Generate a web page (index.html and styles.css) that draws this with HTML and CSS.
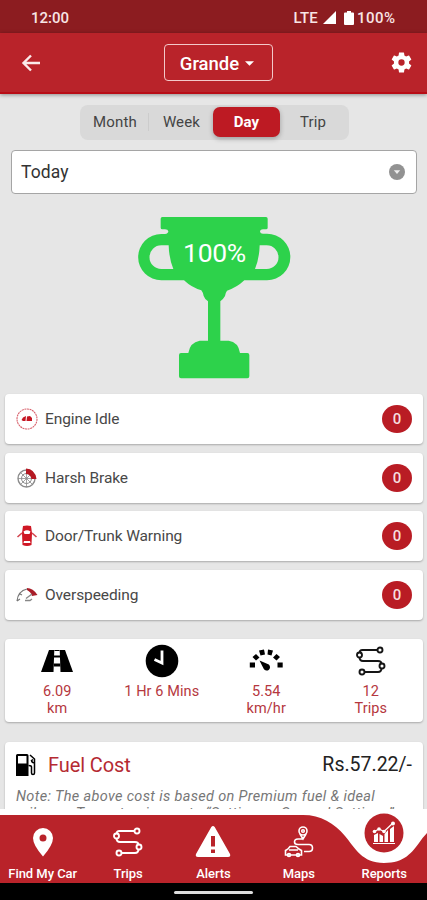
FILE: index.html
```html
<!DOCTYPE html>
<html lang="en">
<head>
<meta charset="utf-8">
<title>Reports</title>
<link rel="stylesheet" href="styles.css">
</head>
<body>
<svg class="defs" width="0" height="0">
  <symbol id="route" viewBox="0 0 30 30">
    <g fill="none" stroke="currentColor" stroke-width="1.9">
      <path d="M22 4H6.500Q3.500 4 3.500 7M3.500 11Q3.500 15 7 15H22Q25.500 15 25.500 18M25.500 22Q25.500 26 22 26H9"/>
      <circle cx="24" cy="4" r="2.500"/><circle cx="3.500" cy="9" r="2.500"/><circle cx="26" cy="20" r="2.500"/><circle cx="6" cy="26" r="2.500"/>
    </g>
  </symbol>
</svg>
<div class="status">
  <span class="time">12:00</span>
  <span class="lte">LTE</span>
  <svg class="signal" viewBox="0 0 13 13"><path d="M13 0V13H0Z"/></svg>
  <svg class="battery" viewBox="0 0 10 14"><path d="M3 0H7V1.500H9Q10 1.500 10 2.500V13Q10 14 9 14H1Q0 14 0 13V2.500Q0 1.500 1 1.500H3Z"/></svg>
  <span class="pct">100%</span>
</div>
<header class="appbar">
  <svg class="back" viewBox="0 0 20 18"><path d="M10 1.500L2.500 9L10 16.500M2.500 9H19"/></svg>
  <div class="picker"><span>Grande</span><svg viewBox="0 0 10 5"><path d="M0 0H10L5 5Z"/></svg></div>
  <svg class="gear" viewBox="2 2 20 20"><path d="M19.140 12.940c.04-.3.060-.61.060-.94 0-.32-.02-.64-.07-.94l2.030-1.580a.49.490 0 0 0 .12-.61l-1.920-3.320a.488.488 0 0 0-.59-.22l-2.390.96c-.5-.38-1.030-.7-1.620-.94l-.36-2.540a.484.484 0 0 0-.48-.41h-3.840c-.24 0-.43.170-.47.410l-.36 2.540c-.59.240-1.130.570-1.620.940l-2.390-.96c-.22-.08-.47 0-.59.220L2.740 8.870c-.12.210-.08.470.12.610l2.030 1.580c-.05.3-.09.630-.09.940s.02.640.070.940l-2.030 1.580a.49.490 0 0 0-.12.610l1.920 3.320c.12.220.37.290.59.220l2.390-.96c.5.380 1.030.7 1.620.940l.36 2.540c.05.240.24.410.48.410h3.840c.24 0 .44-.17.470-.41l.36-2.540c.59-.24 1.130-.56 1.620-.94l2.390.96c.22.080.47 0 .59-.22l1.920-3.320c.12-.22.070-.47-.12-.61zM12 15a3 3 0 1 1 0-6 3 3 0 0 1 0 6z"/></svg>
</header>
<main class="content">
  <nav class="tabs">
    <span class="tab">Month</span><span class="tab divided">Week</span><span class="tab active">Day</span><span class="tab">Trip</span>
  </nav>
  <div class="select"><span>Today</span><svg viewBox="0 0 16 16"><circle cx="8" cy="8" r="8" fill="#929292"/><path d="M4.800 6.300H11.200L8 10Z" fill="#eee"/></svg></div>
  <div class="score">
    <svg viewBox="0 0 540 555">
      <path fill="#2dd24b" fill-rule="evenodd" d="M112 36H423Q428 36 428 41V68Q428 73 423 73H414Q405 74 405 80Q406 86 414 86H426A69.500 69.500 0 0 1 426 226H358Q335 248 306 257Q301 264 300 273Q296 281 286 289V407H311Q340 411 345 444H367Q373 444 373 450V514Q373 520 367 520H168Q162 520 162 514V450Q162 444 168 444H190Q195 412 224 407H249V289Q239 282 236 273Q234 262 229 256Q200 248 177 226H109A69.500 69.500 0 0 1 109 87H120Q130 86 130 79Q129 73 120 73H112Q107 73 107 68V41Q107 36 112 36ZM131 121H109A35.500 35.500 0 0 0 109 192H145Q132 160 131 121ZM404 121Q403 160 390 192H425A35.500 35.500 0 0 0 425 121Z"/>
    </svg>
    <span>100%</span>
  </div>
  <ul class="events">
    <li>
      <svg viewBox="0 0 22 22"><circle cx="11" cy="11" r="10" fill="none" stroke="#d8606b" stroke-width="1.100" stroke-dasharray="2 .6"/><path d="M5.500 12L7 9.500L10 8L9.500 13H7ZM11 8.500L14 8L16 10V13H10.500Z" fill="#c51623"/></svg>
      <span>Engine Idle</span><b>0</b>
    </li>
    <li>
      <svg viewBox="0 0 22 22"><g fill="none" stroke="#8c8c8c"><circle cx="10.500" cy="11.500" r="8.500" stroke-width="1.400"/><circle cx="10.500" cy="11.500" r="5"/><path d="M2 11.500H19M10.500 3V20M4.500 5.500L16.500 17.500M16.500 5.500L4.500 17.500" stroke-width=".8"/></g><path d="M10 1.500Q19 2 20.500 12L15.500 12Q14.500 7 10 7Z" fill="#b51923"/></svg>
      <span>Harsh Brake</span><b>0</b>
    </li>
    <li>
      <svg viewBox="0 0 22 22"><path d="M7 1Q11 0 15 1L16 8L15.500 20Q11 22 6.500 20L6 8Z" fill="#cf1724"/><path d="M7.500 6.500Q11 4 14.500 6.500L13.500 9H8.500ZM8 16H14L14.500 18H7.500Z" fill="#fff"/><path d="M6 8L1.500 12M16 8L20.500 12" stroke="#d34650" stroke-width="1.600"/></svg>
      <span>Door/Trunk Warning</span><b>0</b>
    </li>
    <li>
      <svg viewBox="0 0 22 22"><path d="M1 17Q2 7 11 5M1 17L4 15M4 10L6 11" fill="none" stroke="#777" stroke-width="1.200"/><path d="M11 4Q17 4 21.500 11L16 12Q15 8 11 6Z" fill="#a91e29"/><path d="M16 10L10 14.500M9 16.500H14L16 15" fill="none" stroke="#888" stroke-width="1.300"/></svg>
      <span>Overspeeding</span><b>0</b>
    </li>
  </ul>
  <section class="stats">
    <div>
      <svg viewBox="0 0 34 34"><path d="M9 6H25L33 28H1Z"/><path d="M14.300 6H19.700L20.500 28H13.500Z" fill="#fff"/><path d="M14.500 6H19.500V7H14.500ZM14 11.500H20V13.500H14ZM13.800 19.500H20.300V22.500H13.800Z"/></svg>
      <p>6.09<br>km</p>
    </div>
    <div>
      <svg viewBox="0 0 34 34"><circle cx="17" cy="17" r="16.300"/><path d="M17 6.500V19L9.500 15.500" fill="none" stroke="#fff" stroke-width="2.800"/></svg>
      <p>1 Hr 6 Mins</p>
    </div>
    <div>
      <svg viewBox="0 0 34 34"><path d="M0.800 18.500H6V23.500H.8ZM28.500 18.500H33.700V23.500H28.500ZM3.500 13L7 10L10.500 13.500L7 16.500ZM24 13.500L27.500 10L31 13L27.500 16.500ZM10 6.500L15 5.500L16 10.500L11.500 11.500ZM19 5.500L24 6.500L22.500 11.500L18.500 10.500Z"/><path d="M10.500 16.500L19.800 20.500A3.400 3.400 0 1 1 14.800 25Z"/></svg>
      <p>5.54<br>km/hr</p>
    </div>
    <div>
      <svg class="route"><use href="#route"/></svg>
      <p>12<br>Trips</p>
    </div>
  </section>
  <section class="fuel">
    <div class="fuel-head">
      <svg viewBox="0 0 21 22"><path fill-rule="evenodd" d="M1.500 0H11Q12.500 0 12.500 1.500V22H0V1.500Q0 0 1.500 0ZM2 2V9.500H10.500V2Z"/><path d="M14 1L18.500 5V9Q16 9 15.500 6.500L17 5.500M18.500 8V19Q18.500 20.500 17 20.500Q15.500 20.500 15.500 19V13Q15.500 11.500 12.500 11.500" fill="none" stroke="#000" stroke-width="1.500"/></svg>
      <h2>Fuel Cost</h2><span>Rs.57.22/-</span>
    </div>
    <p>Note: The above cost is based on Premium fuel &amp; ideal<br>mileage. To customize go to “Settings &gt; General Settings”.</p>
  </section>
</main>
<footer class="bottom">
  <svg class="wave" viewBox="0 0 427 74" preserveAspectRatio="none"><path fill="#b9232a" d="M0 6H303C321 6 334 14 345 27C355 39 362 54 384 54C405 54 412 43 419 34Q423 28 427 24V74H0Z"/></svg>
  <nav class="menu">
    <a><svg viewBox="0 0 30 30"><path fill-rule="evenodd" d="M15 1A10 10 0 0 1 25 11Q25 18 15 29.500Q5 18 5 11A10 10 0 0 1 15 1ZM15 7.500A3.500 3.500 0 1 0 15 14.500A3.500 3.500 0 1 0 15 7.500Z"/></svg><span>Find My Car</span></a>
    <a><svg><use href="#route"/></svg><span>Trips</span></a>
    <a><svg class="alert" viewBox="0 0 36 32"><path fill-rule="evenodd" d="M16.300 1Q18 -1 19.700 1L35 28Q36 31 33 31H3Q0 31 1 28ZM16 10V20.500H20V10ZM16 23.500V27H20V23.500Z"/></svg><span>Alerts</span></a>
    <a><svg class="map" viewBox="0 0 30 32"><g fill="none" stroke="#fff" stroke-width="1.600"><circle cx="19" cy="5" r="4"/><circle cx="19" cy="5" r="1.300"/><path d="M16 8L19 13L22 8M19 13H14Q10.500 13 10.500 16Q10.500 18.500 14 18.500H25Q28.500 18.500 28.500 22Q28.500 25.500 25 25.500H20M1.500 29V24.500L4 23L6 20.500H12L15 23L17.500 24.500V29ZM5 24H14"/><circle cx="5" cy="29" r="1.500"/><circle cx="14" cy="29" r="1.500"/></g></svg><span>Maps</span></a>
    <a><svg class="report" viewBox="0 0 40 40"><circle cx="20" cy="20" r="19.500" fill="#b9232a"/><path d="M9 30H31V31H9ZM10 22L14 20V29H10ZM15.500 21L19 23V29H15.500ZM20.500 21L24 17V29H20.500ZM26 16L30 13V29H26Z"/><path d="M10.500 18.500L15 16L20 18.500L29 10" fill="none" stroke="#fff" stroke-width="1.300"/><circle cx="10.500" cy="18.500" r="1.800"/><circle cx="15" cy="16" r="1.800"/><circle cx="20" cy="18.500" r="1.800"/><circle cx="29" cy="10.500" r="2"/></svg><span>Reports</span></a>
  </nav>
</footer>
<div class="gesture"><i></i></div>
</body>
</html>
```
FILE: styles.css
```css
* { box-sizing: border-box; margin: 0; padding: 0; }
body { width: 427px; height: 900px; overflow: hidden; display: flex; flex-direction: column; background: #e6e6e6; font-family: Roboto, sans-serif; color: #333; }
svg { display: block; flex: none; overflow: visible; }
.defs { position: absolute; }
.status { height: 33px; flex: none; background: #8c1c20; color: #f8e5e5; display: flex; align-items: center; padding: 2px 30px 0 31px; font-size: 15px; font-weight: 500; }
.time { flex: 1; }
.lte { font-size: 15px; letter-spacing: .2px; }
.signal { width: 13px; height: 13px; margin: 0 8px 0 5px; fill: #fff; }
.battery { width: 10px; height: 14px; margin-right: 3px; fill: #fff; }
.pct { font-size: 15px; width: 40px; letter-spacing: .5px; }
.appbar { height: 61px; flex: none; background: #b9232a; border-bottom: 2px solid #b80d16; box-shadow: 0 1px 4px #0006; display: grid; grid-template-columns: 1fr auto 1fr; align-items: center; padding: 0 15px 0 21px; z-index: 1; }
.back { width: 20px; height: 18px; fill: none; stroke: #fbeaea; stroke-width: 2.400; }
.picker { width: 109px; height: 37px; margin-right: -3px; border: 1.500px solid #f3c8c9; border-radius: 4px; display: flex; align-items: center; justify-content: center; gap: 6px; color: #fff; font-size: 18.500px; font-weight: 500; padding: 2px 3px 0 0; }
.picker span { margin-left: 1px; }
.picker svg { width: 9px; height: 5px; fill: #fff; }
.gear { width: 21px; height: 21px; fill: #fff; justify-self: end; }
.content { height: 715px; flex: none; overflow: hidden; }
.tabs { width: 269px; height: 35px; margin: 11px auto 0 80px; padding: 2px 3px 2px 2px; background: #d9d9d9; border-radius: 8px; display: grid; grid-template-columns: repeat(4, 1fr); font-size: 15px; color: #444; letter-spacing: .15px; }
.tab { display: flex; align-items: center; justify-content: center; margin-bottom: 1px; }
.divided { border-left: 1px solid #ccc; height: 18px; margin-top: 6px; }
.active { background: #bd1a23; color: #fff; font-weight: 700; border-radius: 7px; box-shadow: 0 2px 5px #0004; margin: 0 0 1px -1px; }
.select { width: 406px; height: 44px; margin: 10px 0 0 11px; border: 1px solid #a5a5a5; border-radius: 4px; background: #fff; display: flex; justify-content: space-between; align-items: center; padding: 0 11px 0 9px; font-size: 17.500px; letter-spacing: .1px; }
.select svg { width: 16px; height: 16px; }
.score { width: 180px; height: 185px; margin: 11px 0 0 125px; display: grid; }
.score > * { grid-area: 1 / 1; }
.score svg { width: 180px; height: 185px; }
.score span { justify-self: center; margin: 31px 0 0 -1px; color: #fff; font-size: 26.500px; line-height: 33px; letter-spacing: -.3px; }
.events { list-style: none; margin: 4px 4px 0 5px; display: grid; gap: 8.600px; }
.events li, .stats, .fuel { background: #fff; border-radius: 4px; box-shadow: 0 1px 2px #0004; }
.events li { height: 50px; display: flex; align-items: center; padding: 0 11px 0 11px; font-size: 15.500px; letter-spacing: -.1px; color: #484848; }
.events svg { width: 22px; height: 22px; }
.events span { flex: 1; margin-left: 7px; }
.events b { width: 30px; height: 28px; border-radius: 50%; background: #b91c24; color: #f6dedf; font-size: 15px; font-weight: 500; display: flex; align-items: center; justify-content: center; }
.stats { height: 83px; margin: 19px 4px 0 5px; display: grid; grid-template-columns: repeat(4, 1fr); padding-top: 5px; text-align: center; }
.stats svg { width: 34px; height: 34px; margin: 0 auto 5px; }
.stats .route { width: 30px; height: 30px; margin: 2px auto 7px; color: #151515; }
.stats p { font-size: 14.500px; line-height: 17.500px; color: #b5373e; letter-spacing: .1px; }
.fuel { height: 90px; margin: 20px 4px 0 5px; padding: 10px 11px; }
.fuel-head { display: flex; align-items: center; height: 26px; }
.fuel-head svg { width: 21px; height: 22px; }
.fuel h2 { flex: 1; margin-left: 11px; font-size: 20px; font-weight: 400; color: #b52a32; letter-spacing: -.1px; }
.fuel-head span { font-size: 19.500px; color: #222; }
.fuel p { margin-top: 10px; font-size: 14.500px; line-height: 17px; font-style: italic; color: #777; white-space: nowrap; letter-spacing: .34px; }
.bottom { height: 74px; flex: none; background: #fff; display: grid; }
.bottom > * { grid-area: 1 / 1; }
.wave { width: 427px; height: 74px; }
.menu { display: grid; grid-template-columns: repeat(5, 1fr); position: relative; color: #fff; }
.menu a { display: flex; flex-direction: column; align-items: center; justify-content: space-between; padding: 18px 0 1px; font-size: 13px; font-weight: 500; line-height: 16px; white-space: nowrap; letter-spacing: -.05px; }
.menu svg { width: 30px; height: 30px; fill: #fff; }
.menu .alert { width: 36px; height: 32px; margin-top: -1px; }
.menu .map { height: 32px; margin-top: -1px; }
.menu .report { width: 40px; height: 40px; margin-top: -14px; }
.gesture { height: 17px; flex: none; background: #000; display: flex; justify-content: center; align-items: center; padding-top: 1px; }
.gesture i { width: 79px; height: 3px; border-radius: 2px; background: #ddd; }
```
